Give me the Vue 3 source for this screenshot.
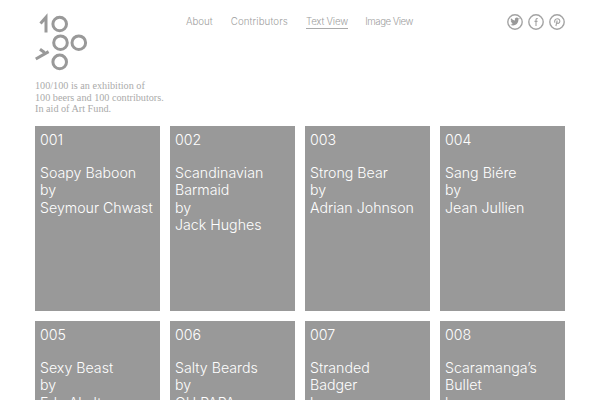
<script setup>
const cards = [
  { n: '001', title: ['Soapy Baboon'], by: 'Seymour Chwast' },
  { n: '002', title: ['Scandinavian', 'Barmaid'], by: 'Jack Hughes' },
  { n: '003', title: ['Strong Bear'], by: 'Adrian Johnson' },
  { n: '004', title: ['Sang Biére'], by: 'Jean Jullien' },
  { n: '005', title: ['Sexy Beast'], by: 'Eda Akaltun' },
  { n: '006', title: ['Salty Beards'], by: 'OH PAPA' },
  { n: '007', title: ['Stranded', 'Badger'], by: 'Lucy Vigrass' },
  { n: '008', title: ['Scaramanga’s', 'Bullet'], by: 'Luke Best' }
]
const nav = ['About', 'Contributors', 'Text View', 'Image View']
</script>

<template>
  <div class="page">
    <header class="head">
      <div class="brand">
        <svg class="logo" width="60" height="60" viewBox="0 0 60 60" fill="none" stroke="#999" stroke-width="3">
          <path d="M5.500 10.500 11 4.200V19.500" />
          <circle cx="24.700" cy="11" r="6.800" />
          <circle cx="25.500" cy="29.700" r="6.800" />
          <circle cx="43.800" cy="29.700" r="6.800" />
          <circle cx="24.700" cy="48.900" r="6.800" />
          <path d="M.8 46 13.600 38.600M5 36.200l4.500 3.300" />
        </svg>
        <p class="intro">100/100 is an exhibition of<br />100 beers and 100 contributors.<br />In aid of Art Fund.</p>
      </div>
      <nav class="nav">
        <a v-for="item in nav" :key="item" :class="{ active: item === 'Text View' }">{{ item }}</a>
      </nav>
      <div class="social">
        <svg width="16" height="16" viewBox="0 0 16 16">
          <circle cx="8" cy="8" r="7.200" fill="none" stroke="#a3a3a3" stroke-width="1.400" />
          <path fill="#999" transform="translate(-1 -1) scale(1.120)" d="M12.400 5.200c-.3.2-.7.3-1 .3.4-.2.6-.5.8-.9-.3.2-.7.3-1.100.4a1.700 1.700 0 0 0-3 1.600C6.700 6.500 5.400 5.800 4.500 4.700c-.5.800-.2 1.800.5 2.300-.3 0-.5-.1-.8-.2 0 .8.6 1.500 1.400 1.700-.3.1-.5.1-.8 0 .2.700.9 1.200 1.600 1.200-.7.600-1.700.8-2.600.7 2.700 1.700 7.400.4 7.300-4.800.4-.1.700-.5 1.300-1.400z" />
        </svg>
        <svg width="16" height="16" viewBox="0 0 16 16" fill="none" stroke="#a3a3a3">
          <circle cx="8" cy="8" r="7.200" stroke-width="1.400" />
          <path stroke-width="1.100" d="M9.700 4.600C8.600 4.300 8 4.900 8 6v6M6.500 7.400h3" />
        </svg>
        <svg width="16" height="16" viewBox="0 0 16 16" fill="none" stroke="#a3a3a3">
          <circle cx="8" cy="8" r="7.200" stroke-width="1.400" />
          <path stroke-width="1.100" d="M6 8.800C5 7 6.200 4.800 8.300 4.800c1.800 0 2.800 1.300 2.500 2.900-.3 1.500-2 2.300-2.900 1.100M8.200 6.500 6.900 12" />
        </svg>
      </div>
    </header>
    <main class="grid">
      <article v-for="c in cards" :key="c.n" class="card">
        <div class="num">{{ c.n }}</div>
        <div v-for="t in c.title" :key="t">{{ t }}</div>
        <div>by</div>
        <div>{{ c.by }}</div>
      </article>
    </main>
  </div>
</template>

<style>
html, body { margin: 0; overflow: hidden; background: #fff; }
</style>

<style scoped>
.page { width: 530px; height: 400px; overflow: hidden; margin-left: 35px; }
.head { display: flex; height: 126px; }
.brand { width: 151px; padding-top: 13px; flex: none; }
.logo { display: block; }
.intro {
  margin: 7px 0 0;
  font: 10.200px/11.500px "Liberation Serif", serif;
  color: #aaa;
  white-space: nowrap;
}
.nav {
  display: flex;
  gap: 18px;
  height: 29px;
  align-items: flex-start;
  padding-top: 16px;
  box-sizing: border-box;
  font: 300 9.700px/12px Inter, sans-serif;
  color: #a0a0a0;
}
.nav a { display: block; height: 12px; }
.nav a:nth-child(2) { letter-spacing: .12px; }
.nav a:nth-child(3) { letter-spacing: -.22px; margin-right: -.5px; }
.nav a:last-child { letter-spacing: -.5px; }
.nav a.active { border-bottom: 1px solid #aaa; }
.social { display: flex; gap: 5px; margin-left: auto; padding-top: 14px; }
.grid { display: grid; grid-template-columns: repeat(4, 125px); grid-auto-rows: 185px; gap: 10px; }
.card {
  background: #999;
  color: #fff;
  padding: 5px;
  font: 350 14.200px/17.500px Inter, sans-serif;
  box-sizing: border-box;
  white-space: nowrap;
}
.num { margin-bottom: 15px; }
</style>
